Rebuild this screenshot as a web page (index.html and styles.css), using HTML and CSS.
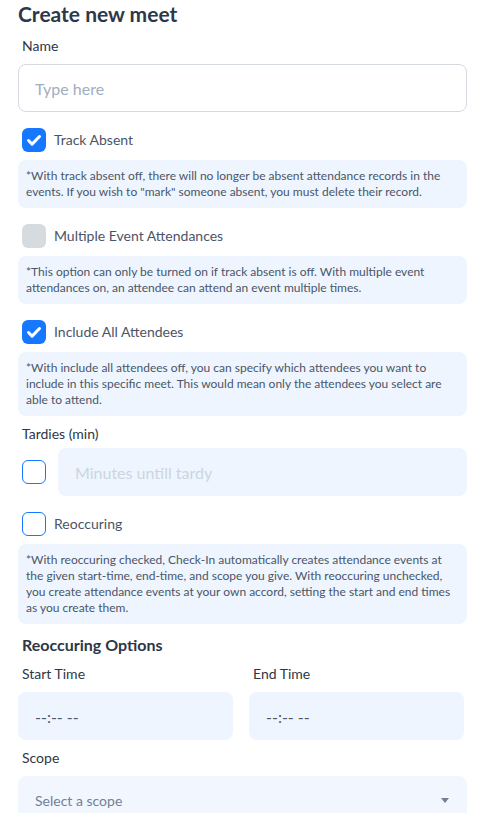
FILE: index.html
```html
<!DOCTYPE html>
<html lang="en">
<head>
<meta charset="utf-8">
<title>Create new meet</title>
<link rel="stylesheet" href="styles.css">
</head>
<body>
<div class="form">
  <h1 class="title">Create new meet</h1>

  <label class="label label-name">Name</label>
  <input class="text-input" type="text" placeholder="Type here">

  <div class="check-row">
    <span class="box checked"><svg viewBox="0 0 24 24" width="24" height="24"><path d="M6.5 12.5l3.6 3.6 7.4-7.6" fill="none" stroke="#fff" stroke-width="3" stroke-linecap="round" stroke-linejoin="round"/></svg></span>
    <span class="check-label">Track Absent</span>
  </div>
  <p class="note">*With track absent off, there will no longer be absent attendance records in the events. If you wish to "mark" someone absent, you must delete their record.</p>

  <div class="check-row">
    <span class="box disabled"></span>
    <span class="check-label">Multiple Event Attendances</span>
  </div>
  <p class="note">*This option can only be turned on if track absent is off. With multiple event attendances on, an attendee can attend an event multiple times.</p>

  <div class="check-row">
    <span class="box checked"><svg viewBox="0 0 24 24" width="24" height="24"><path d="M6.5 12.5l3.6 3.6 7.4-7.6" fill="none" stroke="#fff" stroke-width="3" stroke-linecap="round" stroke-linejoin="round"/></svg></span>
    <span class="check-label">Include All Attendees</span>
  </div>
  <p class="note">*With include all attendees off, you can specify which attendees you want to include in this specific meet. This would mean only the attendees you select are able to attend.</p>

  <label class="label label-tardy">Tardies (min)</label>
  <div class="tardy-row">
    <span class="box empty"></span>
    <input class="soft-input" type="text" placeholder="Minutes untill tardy" disabled>
  </div>

  <div class="check-row">
    <span class="box empty"></span>
    <span class="check-label">Reoccuring</span>
  </div>
  <p class="note">*With reoccuring checked, Check-In automatically creates attendance events at the given start-time, end-time, and scope you give. With reoccuring unchecked, you create attendance events at your own accord, setting the start and end times as you create them.</p>

  <h2 class="subtitle">Reoccuring Options</h2>
  <div class="time-grid">
    <div class="time-field">
      <label class="label">Start Time</label>
      <div class="time-input">--:-- --</div>
    </div>
    <div class="time-field">
      <label class="label">End Time</label>
      <div class="time-input">--:-- --</div>
    </div>
  </div>

  <label class="label label-scope">Scope</label>
  <div class="select">
    <span>Select a scope</span>
    <svg class="caret" viewBox="0 0 8 5" width="8" height="5"><path d="M0 0h8L4 5z" fill="#718096"/></svg>
  </div>
</div>
</body>
</html>
```

FILE: styles.css
```css
* { box-sizing: border-box; }
html, body { margin: 0; padding: 0; background: #fff; }
body {
  font-family: "Lato", "Noto Sans", sans-serif;
  color: #2d3748;
  overflow: hidden;
}
.form {
  width: 488px;
  padding: 0 21px 0 18px;
  display: flex;
  flex-direction: column;
}
.title {
  margin: 0;
  font-size: 21px;
  line-height: 28px;
  font-weight: 700;
  color: #2d3748;
}
.label {
  display: block;
  font-size: 14px;
  line-height: 20px;
  color: #2d3748;
  padding-left: 4px;
}
.label-name { margin-top: 8px; margin-bottom: 8px; }
.text-input {
  height: 48px;
  width: 100%;
  border: 1px solid #d5dae1;
  border-radius: 8px;
  padding: 0 16px;
  font: inherit;
  font-size: 16px;
  color: #2d3748;
  outline: none;
}
.text-input::placeholder { color: #a0aec0; }
.check-row {
  display: flex;
  align-items: center;
  gap: 8px;
  padding-left: 4px;
  margin-top: 16px;
  height: 24px;
}
.box {
  width: 24px;
  height: 24px;
  border-radius: 6px;
  flex: none;
  display: block;
}
.box svg { display: block; }
.box.checked { background: #1677ff; }
.box.disabled { background: #d6dbe0; }
.box.empty { border: 1.5px solid #1677ff; background: #fff; }
.check-label {
  font-size: 14px;
  line-height: 20px;
  color: #4a5568;
}
.note {
  margin: 8px 0 0;
  background: #eef5ff;
  border-radius: 8px;
  padding: 8px;
  font-size: 12px;
  line-height: 16px;
  color: #4a5568;
}
.label-tardy { margin-top: 8px; margin-bottom: 4px; }
.tardy-row {
  display: flex;
  align-items: center;
  gap: 12px;
  padding-left: 4px;
}
.soft-input {
  flex: 1;
  min-width: 0;
  height: 48px;
  border: none;
  border-radius: 8px;
  background: #eef5ff;
  padding: 0 17px;
  font: inherit;
  font-size: 16px;
  outline: none;
}
.soft-input::placeholder { color: #cbd5e0; }
.subtitle {
  margin: 9px 0 0;
  font-size: 16px;
  line-height: 24px;
  font-weight: 700;
  color: #2d3748;
  padding-left: 4px;
}
.time-grid {
  display: grid;
  grid-template-columns: 1fr 1fr;
  gap: 16px;
  margin-top: 7px;
  margin-right: 3px;
}
.time-field { display: flex; flex-direction: column; gap: 8px; }
.time-input {
  height: 48px;
  border-radius: 8px;
  background: #eef5ff;
  padding: 0 17px;
  display: flex;
  align-items: center;
  font-size: 16px;
  color: #4a5568;
}
.label-scope { margin-top: 8px; margin-bottom: 8px; }
.select {
  height: 48px;
  border-radius: 8px;
  background: #f2f7ff;
  padding: 0 18px 0 17px;
  display: flex;
  align-items: center;
  justify-content: space-between;
  font-size: 14px;
  color: #718096;
}
.caret { display: block; }
```
